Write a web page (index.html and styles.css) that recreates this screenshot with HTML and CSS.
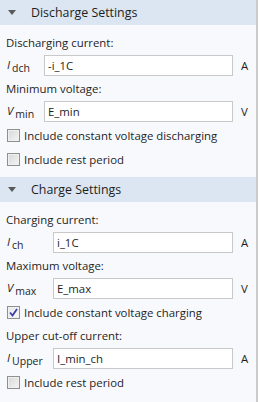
FILE: index.html
```html
<!DOCTYPE html>
<html>
<head>
  <meta charset="UTF-8">
  <link rel="stylesheet" href="styles.css">
</head>
<body>
  <div class="panel">
    <div class="section-head">
      <span class="caret"></span>
      <span>Discharge Settings</span>
    </div>
    <div class="section-body">
      <div class="field-label">Discharging current:</div>
      <div class="field-row">
        <span class="sym"><i>I</i><sub>dch</sub></span>
        <div class="input">-i_1C</div>
        <span class="unit">A</span>
      </div>
      <div class="field-label">Minimum voltage:</div>
      <div class="field-row">
        <span class="sym"><i>V</i><sub>min</sub></span>
        <div class="input">E_min</div>
        <span class="unit">V</span>
      </div>
      <label class="check"><span class="box"></span>Include constant voltage discharging</label>
      <label class="check"><span class="box"></span>Include rest period</label>
    </div>

    <div class="section-head">
      <span class="caret"></span>
      <span>Charge Settings</span>
    </div>
    <div class="section-body wide">
      <div class="field-label">Charging current:</div>
      <div class="field-row">
        <span class="sym"><i>I</i><sub>ch</sub></span>
        <div class="input">i_1C</div>
        <span class="unit">A</span>
      </div>
      <div class="field-label">Maximum voltage:</div>
      <div class="field-row">
        <span class="sym"><i>V</i><sub>max</sub></span>
        <div class="input">E_max</div>
        <span class="unit">V</span>
      </div>
      <label class="check"><span class="box checked">
        <svg width="9" height="9" viewBox="0 0 9 9"><path d="M1 4.5 L3.5 7.5 L8 1" fill="none" stroke="#3b3fa8" stroke-width="1.8"/></svg>
      </span>Include constant voltage charging</label>
      <div class="field-label">Upper cut-off current:</div>
      <div class="field-row">
        <span class="sym"><i>I</i><sub>Upper</sub></span>
        <div class="input">I_min_ch</div>
        <span class="unit">A</span>
      </div>
      <label class="check"><span class="box"></span>Include rest period</label>
    </div>
  </div>
</body>
</html>
```

FILE: styles.css
```css
* {
  margin: 0;
  padding: 0;
  box-sizing: border-box;
}

body {
  width: 258px;
  height: 402px;
  overflow: hidden;
  font-family: "Open Sans", "Noto Sans", sans-serif;
  font-size: 11.4px;
  color: #1e1e1e;
  background: #f8f9fd;
}

.panel {
  height: 402px;
  border-right: 2px solid #cbcbcb;
  background: #f8f9fd;
}

/* section header band */
.section-head {
  display: flex;
  align-items: center;
  height: 25px;
  padding-left: 8px;
  gap: 15px;
  background: #dbe6f2;
  font-size: 12.4px;
}

.caret {
  width: 0;
  height: 0;
  border-left: 4px solid transparent;
  border-right: 4px solid transparent;
  border-top: 5px solid #5a5a5a;
}

.section-body {
  display: grid;
  grid-template-columns: 38px 1fr 23px;
  padding: 6px 0 6px 6px;
}

.section-body.wide {
  grid-template-columns: 47px 1fr 23px;
}

.field-label {
  grid-column: 1 / -1;
  height: 23px;
  line-height: 23px;
}

.field-row {
  display: contents;
}

.sym {
  align-self: center;
  padding-left: 1px;
}

.sym i {
  font-size: 11.4px;
}

.sym sub {
  font-size: 10.5px;
  vertical-align: -3px;
  margin-left: 2px;
}

.input {
  height: 21px;
  line-height: 19px;
  margin: 1px 0;
  padding-left: 3px;
  border: 1px solid #c9c9c9;
  background: #ffffff;
}

.unit {
  align-self: center;
  padding-left: 8px;
}

.check {
  grid-column: 1 / -1;
  display: flex;
  align-items: center;
  gap: 4px;
  height: 24px;
  padding-left: 1px;
}

.box {
  width: 13px;
  height: 13px;
  border: 1px solid #8e8f8f;
  background: linear-gradient(135deg, #d8d8d8, #f4f4f4);
  box-shadow: inset 0 0 0 1px #f0f0f0;
  display: flex;
  align-items: center;
  justify-content: center;
}

.box.checked {
  background: linear-gradient(135deg, #e6e6e6, #fafafa);
}
```
